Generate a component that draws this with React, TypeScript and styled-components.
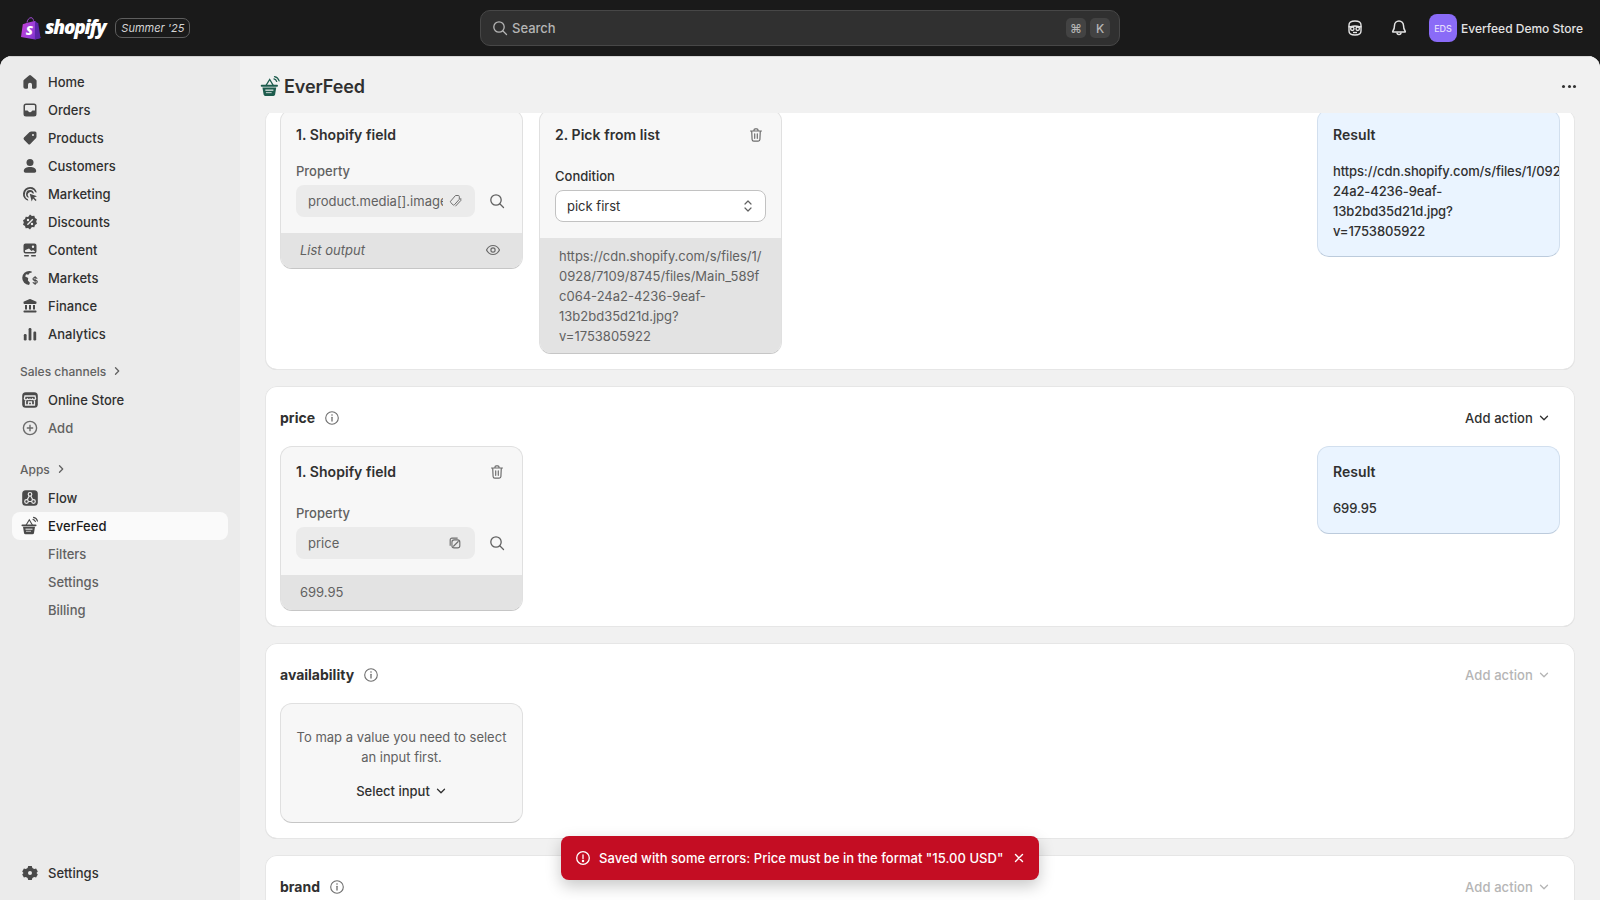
import React from "react";
import styled, { createGlobalStyle } from "styled-components";

const Global = createGlobalStyle`
  html, body { margin: 0; padding: 0; height: 100%; background: #1a1a1a; }
  body { font-family: Inter, "Liberation Sans", sans-serif; color: #303030; -webkit-font-smoothing: antialiased; }
  * { box-sizing: border-box; }
`;

const Page = styled.div`position: relative; width: 100%; height: 100vh; display: flex; flex-direction: column; overflow: hidden; background: #1a1a1a;`;
const TopBar = styled.header`height: 56px; flex: none; display: grid; grid-template-columns: 1fr 640px 1fr; align-items: center; padding: 0 19px; gap: 0;`;
const Brand = styled.div`display: flex; align-items: center; margin-left: 2px;`;
const Wordmark = styled.span`font-family: "Open Sans", sans-serif; font-style: italic; font-weight: 800; font-size: 19px; letter-spacing: -1.2px; color: #fff; margin-left: 4px; margin-top: -2px;`;
const Edition = styled.span`margin-left: 10px; height: 20px; padding: 0 5px; display: inline-flex; align-items: center; border: 1px solid #5e5e5e; border-radius: 7px; font-style: italic; font-size: 11px; color: #d4d4d4;`;
const Search = styled.div`height: 36px; background: #303030; border: 1px solid #474747; border-radius: 10px; display: flex; align-items: center; padding: 0 9px 0 11px; color: #b5b5b5; font-size: 13px; font-weight: 450;`;
const SearchText = styled.span`margin-left: 4px; flex: 1;`;
const Key = styled.span`width: 20px; height: 20px; margin-left: 4px; border-radius: 5px; background: #434343; color: #b5b5b5; font-size: 12px; display: flex; align-items: center; justify-content: center;`;
const TopRight = styled.div`display: flex; align-items: center; justify-content: flex-end; color: #e3e3e3; margin-right: -2px;`;
const TopIcon = styled.span`width: 20px; height: 20px; display: flex; margin-right: 24px;`;
const Avatar = styled.span`width: 28px; height: 28px; margin-left: -4px; border-radius: 8px; background: #8a6bf7; color: #e6defd; font-size: 9px; font-weight: 500; display: flex; align-items: center; justify-content: center;`;
const StoreName = styled.span`margin-left: 4px; font-size: 12px; font-weight: 550; color: #e3e3e3; white-space: nowrap;`;

const Shell = styled.div`flex: 1; min-height: 0; display: flex; border-radius: 12px 12px 0 0; overflow: hidden; background: #f1f1f1; box-shadow: inset 0 1px 0 #c4c4c4;`;
const Sidebar = styled.nav`width: 240px; flex: none; background: #ebebeb; padding: 12px 12px 13px; display: flex; flex-direction: column; justify-content: space-between; border-top: 1px solid #d0d0d0; margin-top: 0;`;
const NavGroup = styled.div`display: flex; flex-direction: column; margin-top: -1px;`;
const NavItem = styled.div<{ $active?: boolean; $muted?: boolean; $sub?: boolean }>`
  height: 28px; display: flex; align-items: center; gap: 8px; padding-left: ${p => (p.$sub ? "36px" : "8px")}; border-radius: 8px;
  font-size: 13px; font-weight: ${p => (p.$sub || p.$muted ? 500 : 550)};
  color: ${p => (p.$active ? "#1a1a1a" : p.$sub || p.$muted ? "#616161" : "#303030")};
  background: ${p => (p.$active ? "#fafafa" : "transparent")};
  svg { flex: none; color: ${p => (p.$muted ? "#6b6b6b" : "#4a4a4a")}; }
`;
const NavHeading = styled.div<{ $gap: number }>`
  height: 28px; margin-top: ${p => p.$gap}px; padding: 0 0 2px 8px; display: flex; align-items: center; gap: 5px;
  font-size: 12px; font-weight: 500; color: #616161;
`;

const Main = styled.main`flex: 1; min-width: 0; display: flex; flex-direction: column;`;
const PageHeader = styled.div`height: 57px; flex: none; padding: 3px 24px 0 19px; display: flex; align-items: center; box-shadow: inset 0 1px 0 #d8d8d8; position: relative; z-index: 1; background: #f1f1f1;`;
const PageTitle = styled.h1`margin: 0 0 0 2px; font-size: 18px; font-weight: 600; color: #303030; letter-spacing: -.1px; flex: 1;`;
const Dots = styled.span`display: flex; gap: 2.5px;`;
const Dot = styled.i`width: 3px; height: 3px; border-radius: 50%; background: #303030;`;
const Scroll = styled.div`flex: 1; min-height: 0; overflow: hidden; padding: 0 25px;`;
const Stack = styled.div`display: flex; flex-direction: column; gap: 16px; margin-top: -4px;`;
const Section = styled.section<{ $clipped?: boolean }>`
  background: #fff; border-radius: 12px; box-shadow: inset 0 0 0 1px #e6e6e6, inset 0 -1px 0 #d0d0d0; padding: ${p => (p.$clipped ? "0" : "16px")} 15px 16px;
`;
const SectionHead = styled.div`height: 32px; margin-bottom: 12px; display: flex; align-items: center;`;
const SectionName = styled.h2`margin: -1px 0 0; font-size: 14px; font-weight: 650; color: #303030;`;
const InfoIcon = styled.span`display: flex; margin-left: 9px; margin-top: -1px; color: #6e6e6e;`;
const AddAction = styled.span<{ $off?: boolean }>`
  margin-left: auto; margin-right: 10px; display: flex; align-items: center; gap: 5px; font-size: 13px; font-weight: 550; letter-spacing: .1px;
  color: ${p => (p.$off ? "#b5b5b5" : "#303030")};
`;
const Row = styled.div`display: flex; align-items: flex-start; gap: 16px;`;
const Card = styled.div<{ $result?: boolean }>`
  width: 243px; flex: none; border-radius: 12px; overflow: hidden; margin-left: ${p => (p.$result ? "auto" : "0")};
  background: ${p => (p.$result ? "#eaf4ff" : "#f7f7f7")};
  border: 1px solid ${p => (p.$result ? "#d2dfee" : "#e0e0e0")};
  border-bottom-color: ${p => (p.$result ? "#bccbdc" : "#c6c6c6")};
  font-size: 13px;
`;
const CardBody = styled.div`padding: 15px 15px 16px;`;
const CardHead = styled.div`height: 20px; display: flex; align-items: center; justify-content: space-between;`;
const CardTitle = styled.h3`margin: -1px 0 0; font-size: 14px; font-weight: 600; color: #303030; letter-spacing: .05px;`;
const Trash = styled.span`display: flex; color: #6e6e6e; margin-right: 2px;`;
const Label = styled.div<{ $gap: number; $dark?: boolean }>`margin-top: ${p => p.$gap}px; margin-bottom: 4px; height: 20px; line-height: 20px; color: ${p => (p.$dark ? "#303030" : "#616161")}; font-weight: 450;`;
const FieldRow = styled.div`display: flex; align-items: center; justify-content: space-between;`;
const ReadOnly = styled.div`width: 179px; height: 32px; border-radius: 8px; background: #ebebeb; padding: 0 13px 0 12px; display: flex; align-items: center; gap: 5px; color: #616161;`;
const ReadOnlyText = styled.span`flex: 1; min-width: 0; overflow: hidden; white-space: nowrap;`;
const SearchBtn = styled.span`display: flex; color: #616161; margin-right: 2px;`;
const Select = styled.div`height: 32px; background: #fff; border: 1px solid #c2c2c2; border-radius: 8px; padding: 0 11px; display: flex; align-items: center; justify-content: space-between; color: #303030;`;
const Output = styled.div<{ $italic?: boolean }>`
  background: #e3e3e3; padding: 7px 21px 8px 19px; min-height: 35px; color: #616161; line-height: 20px; font-style: ${p => (p.$italic ? "italic" : "normal")};
  display: flex; align-items: center; justify-content: space-between;
`;
const UrlOutput = styled.div`background: #e3e3e3; padding: 8px 19px 7px; color: #616161; line-height: 20px; overflow-wrap: anywhere;`;
const ResultValue = styled.div`margin: 16px 0 -1px; line-height: 20px; color: #303030; font-weight: 450; letter-spacing: -.1px; white-space: nowrap;`;
const Empty = styled.div`padding: 23px 15px 21px; display: flex; flex-direction: column; align-items: center; text-align: center; line-height: 20px; color: #616161;`;
const SelectInput = styled.span`margin-top: 14px; display: flex; align-items: center; gap: 5px; color: #303030; font-weight: 550;`;
const Toast = styled.div`
  position: absolute; left: 561px; top: 836px; width: 478px; height: 44px; border-radius: 8px; background: #c40d23; color: #fff;
  box-shadow: 0 6px 16px rgba(0,0,0,.22); display: flex; align-items: center; padding: 0 12px 0 14px; font-size: 13px; font-weight: 500; white-space: nowrap;
`;
const ToastText = styled.span`margin-left: 8px; flex: 1; letter-spacing: .03px;`;

type P = { s?: number };
const Svg: React.FC<React.PropsWithChildren<P>> = ({ s = 20, children }) => (
  <svg width={s} height={s} viewBox="0 0 20 20" fill="currentColor">{children}</svg>
);
const I = {
  Home: () => <Svg><path d="M9 3.4a1.5 1.5 0 0 1 2 0l5 4.3c.4.4.6.8.6 1.3V15a1.8 1.8 0 0 1-1.8 1.8H13a1 1 0 0 1-1-1v-3a2 2 0 0 0-4 0v3a1 1 0 0 1-1 1H5.200A1.800 1.800 0 0 1 3.400 15V9c0-.5.2-.9.6-1.300z"/></Svg>,
  Orders: () => <Svg><path fillRule="evenodd" d="M6 3.500h8A2.500 2.500 0 0 1 16.500 6v8a2.500 2.500 0 0 1-2.500 2.500H6A2.500 2.500 0 0 1 3.500 14V6A2.500 2.500 0 0 1 6 3.500zM6 5a1 1 0 0 0-1 1v4.500h2.300c.5 0 .8.300 1 .7.300.6.900 1 1.700 1s1.400-.4 1.700-1c.2-.4.5-.7 1-.7H15V6a1 1 0 0 0-1-1z"/></Svg>,
  Products: () => <Svg><path fillRule="evenodd" d="M11.200 3.500h3.800a1.500 1.500 0 0 1 1.500 1.500v3.800c0 .6-.2 1.100-.6 1.500l-5.600 5.600a1.500 1.500 0 0 1-2.100 0l-4.200-4.200a1.500 1.500 0 0 1 0-2.100l5.600-5.600c.5-.3 1-.5 1.600-.5zM13 6a1 1 0 1 0 0 2 1 1 0 0 0 0-2z"/></Svg>,
  Customers: () => <Svg><circle cx="10" cy="6.500" r="3.500"/><path d="M3.800 15c0-2.800 2.800-4 6.200-4s6.200 1.200 6.200 4c0 1-.7 1.700-1.700 1.700h-9c-1 0-1.700-.7-1.700-1.700z"/></Svg>,
  Marketing: () => <Svg><path d="M10 3a7 7 0 0 0-1.700 13.800l-.4-1.500A5.500 5.500 0 1 1 15.300 8.200l1.500.4A7 7 0 0 0 10 3z"/><path d="M10 6a4 4 0 0 0-1.200 7.800l-.5-1.500a2.500 2.500 0 1 1 4.100-3l1.500.5A4 4 0 0 0 10 6z"/><path d="M9.700 9.700l7.300 2.600-3 1.200 2.600 2.600-1 1-2.600-2.600-1.300 3z"/></Svg>,
  Discounts: () => <Svg><path fillRule="evenodd" d="M10 2.500l1.900 1.400 2.400-.2.700 2.200 2 1.400-.8 2.200.8 2.200-2 1.400-.7 2.200-2.400-.2L10 17.500l-1.900-1.400-2.400.2-.7-2.200-2-1.400.8-2.200-.8-2.200 2-1.400.7-2.200 2.400.2zM8 6.800a1.200 1.200 0 1 0 0 2.400 1.200 1.200 0 0 0 0-2.400zm4 4a1.200 1.200 0 1 0 0 2.400 1.200 1.200 0 0 0 0-2.400zm.3-4.100l-5.400 5.500 1 1 5.400-5.500z"/></Svg>,
  Content: () => <Svg><path fillRule="evenodd" d="M5.500 3.500h9a2 2 0 0 1 2 2v6a2 2 0 0 1-2 2h-9a2 2 0 0 1-2-2v-6a2 2 0 0 1 2-2zm7.500 2a1.200 1.200 0 1 0 0 2.400 1.200 1.200 0 0 0 0-2.400zM5 10.300V11.500c0 .3.200.5.500.5h9c.3 0 .5-.2.500-.5l-2-1.500-1.500 1-2.500-2.500z"/><rect x="4" y="15" width="5" height="1.500" rx=".7"/><rect x="11" y="15" width="5" height="1.500" rx=".7"/></Svg>,
  Markets: () => <Svg><path d="M9.500 3a7 7 0 0 0-.5 14c.4-.6.700-1.400.9-2.200l-2-2.300.3-2.500-3-1.400L6 6.200l2.300.5L10 4.800l1.300.3.500-1.700A7 7 0 0 0 9.500 3z"/><path d="M14.600 8v1.100c-1.300.2-2.100 1-2.100 2 0 1.200.9 1.700 2.100 2v1.800c-.6-.1-1-.4-1.200-.9l-1 .5c.4.900 1.200 1.400 2.200 1.500V17h1v-1.100c1.300-.2 2.200-1 2.200-2.100 0-1.200-.9-1.700-2.200-2v-1.700c.5.100.8.300 1 .8l1-.5c-.4-.8-1.100-1.300-2-1.400V8zm0 2.100v1.500c-.7-.2-1-.4-1-.8s.3-.6 1-.7zm1 3c.7.2 1.100.4 1.100.8s-.4.700-1.100.8z"/></Svg>,
  Finance: () => <Svg><path d="M9.200 3.200a2 2 0 0 1 1.600 0l5.200 2.300c.4.200.5.500.5.900v.6c0 .5-.4.900-.9.900H4.400a.9.900 0 0 1-.9-.9v-.6c0-.4.100-.7.500-.9z"/><rect x="5" y="9" width="2" height="4.500"/><rect x="9" y="9" width="2" height="4.500"/><rect x="13" y="9" width="2" height="4.500"/><rect x="3.500" y="14.500" width="13" height="2" rx=".7"/></Svg>,
  Analytics: () => <Svg><rect x="3.800" y="10" width="2.800" height="6.500" rx="1.200"/><rect x="8.600" y="4" width="2.800" height="12.500" rx="1.200"/><rect x="13.400" y="7.500" width="2.800" height="9" rx="1.200"/></Svg>,
  Store: () => <Svg><rect x="2.200" y="2.200" width="15.600" height="15.600" rx="3.500" fill="#4a4a4a"/><g fill="none" stroke="#ebebeb" strokeWidth="1.300"><path d="M5 6h10l.6 2.500a1.600 1.600 0 0 1-3 .4 2 2 0 0 1-2.600.200 2 2 0 0 1-2.600-.2 1.600 1.600 0 0 1-3-.4z"/><path d="M5.500 10.500v4.500h9v-4.500"/><path d="M8.500 15v-3h3v3"/></g></Svg>,
  Add: () => <Svg><g fill="none" stroke="currentColor" strokeWidth="1.400"><circle cx="10" cy="10" r="6.600"/><path d="M10 6.800v6.400M6.800 10h6.400"/></g></Svg>,
  Flow: () => <Svg><rect x="2.200" y="2.200" width="15.600" height="15.600" rx="3.500" fill="#4a4a4a"/><g fill="none" stroke="#ebebeb" strokeWidth="1.200"><circle cx="10" cy="6.300" r="1.800"/><circle cx="6.500" cy="13.500" r="1.800"/><circle cx="13.500" cy="13.500" r="1.800"/><path d="M9.200 8l-2 3.800M10.800 8l2 3.800M8.300 13.500h3.400"/></g></Svg>,
  Settings: () => <Svg><path fillRule="evenodd" d="M8.200 3h3.600l.6 1.900 1.800 1 1.900-.4 1.700 3-1.300 1.500 1.300 1.500-1.700 3-1.900-.4-1.800 1-.6 1.900H8.200l-.6-1.900-1.800-1-1.900.4-1.700-3L3.500 10 2.200 8.500l1.700-3 1.900.4 1.800-1zM10 8a2 2 0 1 0 0 4 2 2 0 0 0 0-4z"/></Svg>,
  Chevron: ({ d = "right", s = 12 }: { d?: string; s?: number }) => (
    <svg width={s} height={s} viewBox="0 0 12 12" fill="none" stroke="currentColor" strokeWidth="1.300" strokeLinecap="round" strokeLinejoin="round">
      <path d={d === "right" ? "M4.500 2.800 7.700 6l-3.200 3.200" : "M2.500 4.300 6 7.800l3.500-3.500"} />
    </svg>
  ),
  Search: ({ s = 16 }: P) => <svg width={s} height={s} viewBox="0 0 16 16" fill="none" stroke="currentColor" strokeWidth="1.300" strokeLinecap="round"><circle cx="7" cy="7" r="5.200"/><path d="m11 11 3.500 3.500"/></svg>,
  Info: () => <svg width="16" height="16" viewBox="0 0 16 16" fill="none" stroke="currentColor" strokeWidth="1.100"><circle cx="8" cy="8" r="6.300"/><path d="M8 7.300v3.700" strokeWidth="1.300" strokeLinecap="round"/><circle cx="8" cy="5" r=".8" fill="currentColor" stroke="none"/></svg>,
  Trash: () => <svg width="16" height="16" viewBox="0 0 16 16" fill="none" stroke="currentColor" strokeWidth="1.200" strokeLinecap="round" strokeLinejoin="round"><path d="M2.500 4h11M6 4V3a1.200 1.200 0 0 1 1.200-1.200h1.600A1.200 1.200 0 0 1 10 3v1M3.700 4l.4 8.500a1.700 1.700 0 0 0 1.700 1.600h4.400a1.700 1.700 0 0 0 1.700-1.600l.4-8.500M6.700 6.800v4.500M9.300 6.800v4.500"/></svg>,
  Eye: () => <svg width="16" height="16" viewBox="0 0 16 16" fill="none" stroke="#6b6b6b" strokeWidth="1.200"><path d="M1.500 8c1.500-3 3.800-4.500 6.500-4.500s5 1.500 6.500 4.500c-1.500 3-3.800 4.500-6.500 4.500S3 11 1.500 8z"/><circle cx="8" cy="8" r="2.100"/></svg>,
  Tag: () => <svg width="14" height="14" viewBox="0 0 14 14" fill="none" stroke="#6e6e6e" strokeWidth="1" strokeLinejoin="round"><path d="M7.500 1.500h2.800a1 1 0 0 1 1 1v2.800L6.400 10.800a1 1 0 0 1-1.400 0L2.700 8.500a1 1 0 0 1 0-1.400z"/><path d="M12.800 4.200v2.300L7.400 12.300"/></svg>,
  Meta: () => <svg width="14" height="14" viewBox="0 0 16 16" fill="none" stroke="#6e6e6e" strokeWidth="1.300"><rect x="4.500" y="4.500" width="9" height="9" rx="2.500"/><path d="M11 2.500H4.500a2 2 0 0 0-2 2V11M6 12l6-6"/></svg>,
  Updown: () => <svg width="12" height="16" viewBox="0 0 12 16" fill="none" stroke="#616161" strokeWidth="1.200" strokeLinecap="round" strokeLinejoin="round"><path d="M3 6 6 3l3 3M3 10l3 3 3-3"/></svg>,
  Bell: () => <Svg><g fill="none" stroke="currentColor" strokeWidth="1.500" strokeLinejoin="round"><path d="M10 3a4.500 4.500 0 0 0-4.500 4.500c0 3-.6 4.300-1.700 5.700-.3.400 0 .8.400.8h11.600c.4 0 .7-.4.400-.8-1.100-1.400-1.700-2.700-1.700-5.700A4.500 4.500 0 0 0 10 3z"/><path d="M8 14.500a2 2 0 0 0 4 0"/></g></Svg>,
  Sidekick: () => <Svg><g fill="none" stroke="currentColor" strokeWidth="1.400"><path d="M4 7c0-2.500 2.500-4 6-4s6 1.500 6 4v6c0 2.500-2.500 4-6 4s-6-1.500-6-4z"/><path d="M3.500 8.500c3 1 4.500-.5 6.500-.5s3.500 1.500 6.500.5" strokeWidth="1.700"/><circle cx="7.300" cy="10.800" r="1.700"/><circle cx="12.700" cy="10.800" r="1.700"/><path d="M8 14.500h4"/></g></Svg>,
  Alert: () => <svg width="16" height="16" viewBox="0 0 16 16" fill="none" stroke="#fff" strokeWidth="1.300" strokeLinecap="round"><circle cx="8" cy="8" r="6.300"/><path d="M8 4.800v3.700"/><circle cx="8" cy="11" r=".6" fill="#fff"/></svg>,
  Close: () => <svg width="16" height="16" viewBox="0 0 16 16" fill="none" stroke="#fff" strokeWidth="1.400" strokeLinecap="round"><path d="m4.500 4.500 7 7M11.500 4.500l-7 7"/></svg>,
};

const Basket: React.FC<{ s: number; color: string }> = ({ s, color }) => (
  <svg width={s} height={s} viewBox="0 0 20 20">
    <g fill="none" stroke={color} strokeWidth="1.100" strokeLinecap="round">
      <path d="M6 9.200 9.300 3.800l3.200 5.400" />
      <path d="M13 3.400c1.200.3 2 1.100 2.400 2.200M13.500 1.400c2 .4 3.400 1.800 4 3.700" />
    </g>
    <rect x="1.500" y="8.500" width="15" height="1.700" rx=".8" fill={color} />
    <path d="M3 10.800h12l-1 6.200a1.500 1.500 0 0 1-1.500 1.300h-7A1.500 1.500 0 0 1 4 17z" fill={color} />
    <rect x="5.500" y="12.600" width="7" height="1.200" fill="#f1f1f1" opacity=".85" />
    <rect x="6" y="14.800" width="5" height="1" fill="#f1f1f1" opacity=".7" />
  </svg>
);

const ShopifyBag = () => (
  <svg width="20" height="23" viewBox="0 0 20 23">
    <defs>
      <linearGradient id="bag" x1="0" x2="1" y1="0.3" y2="0.7">
        <stop offset="0" stopColor="#c03fd6" />
        <stop offset="0.55" stopColor="#9a3fd8" />
        <stop offset="1" stopColor="#6c2bc0" />
      </linearGradient>
    </defs>
    <path d="M6 5.500c.3-2.400 2-4.800 4-4.800 1.600 0 2.300 1.400 2.500 3" fill="none" stroke="#a24ad9" strokeWidth="1" />
    <path d="M1.800 7.200 5.500 6l8-2 1.100.600L19.500 21 14 22.600 0 20z" fill="url(#bag)" />
    <path d="M14 4.200 14.800 4.500l1.200 1.300 1.200.2L19.500 21 14 22.600z" fill="#5c25a8" />
    <text x="4.800" y="17.500" fontFamily="'Open Sans', sans-serif" fontWeight="800" fontSize="13" fontStyle="italic" fill="#fff">S</text>
  </svg>
);

const Nav: React.FC<React.PropsWithChildren<{ icon?: React.ReactNode; active?: boolean; muted?: boolean; sub?: boolean }>> = ({ icon, active, muted, sub, children }) => (
  <NavItem $active={active} $muted={muted} $sub={sub}>{icon}{children}</NavItem>
);

const FieldCard: React.FC<{ property: string; icon: React.ReactNode; trash?: boolean; children: React.ReactNode }> = ({ property, icon, trash, children }) => (
  <Card>
    <CardBody>
      <CardHead>
        <CardTitle>1. Shopify field</CardTitle>
        {trash && <Trash><I.Trash /></Trash>}
      </CardHead>
      <Label $gap={trash ? 21 : 16}>Property</Label>
      <FieldRow>
        <ReadOnly><ReadOnlyText>{property}</ReadOnlyText>{icon}</ReadOnly>
        <SearchBtn><I.Search /></SearchBtn>
      </FieldRow>
    </CardBody>
    {children}
  </Card>
);

const Head: React.FC<{ name: string; off?: boolean }> = ({ name, off }) => (
  <SectionHead>
    <SectionName>{name}</SectionName>
    <InfoIcon><I.Info /></InfoIcon>
    <AddAction $off={off}>Add action <I.Chevron d="down" /></AddAction>
  </SectionHead>
);

export default function App() {
  return (
    <Page>
      <Global />
      <TopBar>
        <Brand>
          <ShopifyBag />
          <Wordmark>shopify</Wordmark>
          <Edition>Summer '25</Edition>
        </Brand>
        <Search>
          <I.Search />
          <SearchText>Search</SearchText>
          <Key>⌘</Key>
          <Key>K</Key>
        </Search>
        <TopRight>
          <TopIcon><I.Sidekick /></TopIcon>
          <TopIcon><I.Bell /></TopIcon>
          <Avatar>EDS</Avatar>
          <StoreName>Everfeed Demo Store</StoreName>
        </TopRight>
      </TopBar>
      <Shell>
        <Sidebar>
          <NavGroup>
            <Nav icon={<I.Home />}>Home</Nav>
            <Nav icon={<I.Orders />}>Orders</Nav>
            <Nav icon={<I.Products />}>Products</Nav>
            <Nav icon={<I.Customers />}>Customers</Nav>
            <Nav icon={<I.Marketing />}>Marketing</Nav>
            <Nav icon={<I.Discounts />}>Discounts</Nav>
            <Nav icon={<I.Content />}>Content</Nav>
            <Nav icon={<I.Markets />}>Markets</Nav>
            <Nav icon={<I.Finance />}>Finance</Nav>
            <Nav icon={<I.Analytics />}>Analytics</Nav>
            <NavHeading $gap={10}>Sales channels <I.Chevron /></NavHeading>
            <Nav icon={<I.Store />}>Online Store</Nav>
            <Nav icon={<I.Add />} muted>Add</Nav>
            <NavHeading $gap={14}>Apps <I.Chevron /></NavHeading>
            <Nav icon={<I.Flow />}>Flow</Nav>
            <Nav icon={<Basket s={20} color="#4a4a4a" />} active>EverFeed</Nav>
            <Nav sub>Filters</Nav>
            <Nav sub>Settings</Nav>
            <Nav sub>Billing</Nav>
          </NavGroup>
          <Nav icon={<I.Settings />}>Settings</Nav>
        </Sidebar>
        <Main>
          <PageHeader>
            <Basket s={23} color="#1d5c4d" />
            <PageTitle>EverFeed</PageTitle>
            <Dots><Dot /><Dot /><Dot /></Dots>
          </PageHeader>
          <Scroll>
            <Stack>
              <Section $clipped>
                <Row>
                  <FieldCard property="product.media[].image" icon={<I.Tag />}>
                    <Output $italic>List output <I.Eye /></Output>
                  </FieldCard>
                  <Card>
                    <CardBody>
                      <CardHead>
                        <CardTitle>2. Pick from list</CardTitle>
                        <Trash><I.Trash /></Trash>
                      </CardHead>
                      <Label $gap={21} $dark>Condition</Label>
                      <Select>pick first <I.Updown /></Select>
                    </CardBody>
                    <UrlOutput>https://cdn.shopify.com/s/files/1/<br />0928/7109/8745/files/Main_589f<br />c064-24a2-4236-9eaf-<br />13b2bd35d21d.jpg?<br />v=1753805922</UrlOutput>
                  </Card>
                  <Card $result>
                    <CardBody>
                      <CardHead><CardTitle>Result</CardTitle></CardHead>
                      <ResultValue>https://cdn.shopify.com/s/files/1/0928/7109/8745/files/Main_589fc064-<br />24a2-4236-9eaf-<br />13b2bd35d21d.jpg?<br />v=1753805922</ResultValue>
                    </CardBody>
                  </Card>
                </Row>
              </Section>
              <Section>
                <Head name="price" />
                <Row>
                  <FieldCard property="price" icon={<I.Meta />} trash>
                    <Output>699.95</Output>
                  </FieldCard>
                  <Card $result>
                    <CardBody>
                      <CardHead><CardTitle>Result</CardTitle></CardHead>
                      <ResultValue>699.95</ResultValue>
                    </CardBody>
                  </Card>
                </Row>
              </Section>
              <Section>
                <Head name="availability" off />
                <Row>
                  <Card>
                    <Empty>
                      To map a value you need to select an input first.
                      <SelectInput>Select input <I.Chevron d="down" /></SelectInput>
                    </Empty>
                  </Card>
                </Row>
              </Section>
              <Section>
                <Head name="brand" off />
              </Section>
            </Stack>
          </Scroll>
        </Main>
      </Shell>
      <Toast>
        <I.Alert />
        <ToastText>Saved with some errors: Price must be in the format "15.00 USD"</ToastText>
        <I.Close />
      </Toast>
    </Page>
  );
}
